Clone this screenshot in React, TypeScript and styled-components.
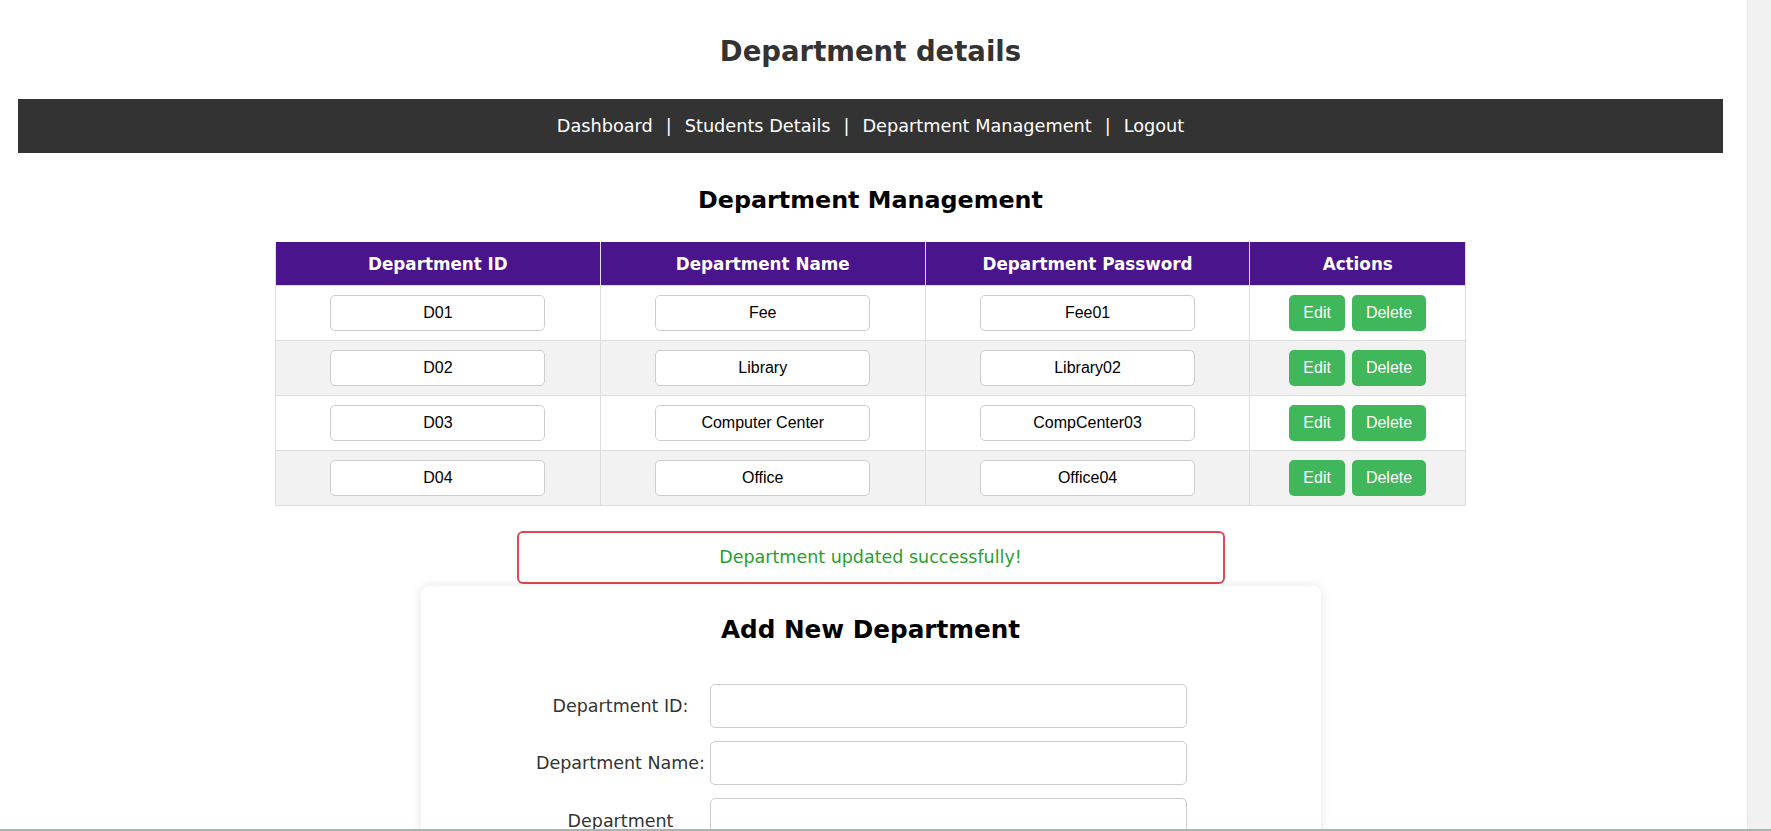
import React from 'react';
import styled, { createGlobalStyle } from 'styled-components';

const GlobalStyle = createGlobalStyle`
	html, body {
		margin: 0;
		padding: 0;
		height: 100%;
		overflow: hidden;
		background: #fff;
		font-family: "Comic Sans MS", "DejaVu Sans", sans-serif;
	}
	#root {
		height: 100%;
	}
`;

const Shell = styled.div`
	height: 100vh;
	display: flex;
	flex-direction: column;
`;

const Body = styled.div`
	flex: 1;
	display: flex;
	min-height: 0;
`;

const Page = styled.div`
	width: 1747px;
	flex-shrink: 0;
	box-sizing: border-box;
	padding: 0 24px 0 18px;
	overflow: hidden;
	background: #fff;
`;

const ScrollTrack = styled.div`
	flex: 1;
	background: #f1f1f1;
	border-left: 1px solid #e8e8e8;
`;

const BottomRule = styled.div`
	height: 2px;
	background: #a9b3b1;
`;

const PageTitle = styled.h1`
	margin: 33px 0 29px;
	text-align: center;
	font-size: 27.5px;
	line-height: 37px;
	font-weight: bold;
	color: #333;
`;

const NavBar = styled.nav`
	height: 54px;
	background: #333;
	display: flex;
	align-items: center;
	justify-content: center;
	color: #fff;
	font-size: 17.7px;
`;

const NavLink = styled.a`
	color: #fff;
	text-decoration: none;
`;

const NavSep = styled.span`
	margin: 0 13px;
`;

const SectionTitle = styled.h2`
	margin: 31px 0 26px;
	text-align: center;
	font-size: 23.8px;
	line-height: 32px;
	font-weight: bold;
	color: #000;
`;

const Table = styled.table`
	width: 1191px;
	margin: 0 auto;
	border-collapse: collapse;
`;

const HeadCell = styled.th<{ $w: number }>`
	width: ${(p) => p.$w}px;
	height: 43px;
	padding: 0;
	background: #4a148c;
	color: #fff;
	font-size: 16.8px;
	font-weight: bold;
	text-align: center;
	border: 1px solid #ddd;
	border-top: none;
`;

const Row = styled.tr<{ $striped: boolean }>`
	background: ${(p) => (p.$striped ? '#f2f2f2' : '#fff')};
`;

const Cell = styled.td`
	height: 36px;
	padding: 9px;
	text-align: center;
	border: 1px solid #ddd;
`;

const CellInput = styled.input`
	width: 215px;
	height: 36px;
	box-sizing: border-box;
	border: 1px solid #ccc;
	border-radius: 5px;
	background: #fff;
	font-family: "Liberation Sans", Arial, sans-serif;
	font-size: 16px;
	color: #000;
	text-align: center;
	outline: none;
	vertical-align: middle;
`;

const ActionButton = styled.button`
	height: 36px;
	padding: 0 14px;
	margin: 0 3.5px;
	border: none;
	border-radius: 5px;
	background: #3fb75a;
	color: #fff;
	font-family: "Liberation Sans", Arial, sans-serif;
	font-size: 16px;
	cursor: pointer;
	vertical-align: middle;
`;

const Notice = styled.div`
	width: 708px;
	box-sizing: border-box;
	margin: 25px auto 2px;
	padding: 14px 10px;
	border: 2px solid #dc4a52;
	border-radius: 6px;
	text-align: center;
	color: #28a02c;
	font-size: 17.5px;
	line-height: 21px;
`;

const Card = styled.div`
	width: 900px;
	box-sizing: border-box;
	margin: 0 auto;
	padding: 28px 22px 40px;
	background: #fff;
	border-radius: 8px;
	box-shadow: 0 0 12px rgba(0, 0, 0, 0.1);
`;

const CardTitle = styled.h2`
	margin: 0 0 38px;
	text-align: center;
	font-size: 24.7px;
	line-height: 32px;
	font-weight: bold;
	color: #000;
`;

const FormRow = styled.div`
	display: flex;
	align-items: center;
	justify-content: center;
	gap: 4px;
	margin-bottom: 13px;
	padding-right: 19px;
`;

const FormLabel = styled.label`
	width: 170px;
	text-align: center;
	font-size: 17.5px;
	line-height: 24px;
	color: #333;
`;

const FormInput = styled.input<{ $tall?: boolean }>`
	width: 477px;
	height: ${(p) => (p.$tall ? 70 : 44)}px;
	box-sizing: border-box;
	border: 1px solid #ccc;
	border-radius: 5px;
	outline: none;
`;

const departments = [
	{ id: 'D01', name: 'Fee', password: 'Fee01' },
	{ id: 'D02', name: 'Library', password: 'Library02' },
	{ id: 'D03', name: 'Computer Center', password: 'CompCenter03' },
	{ id: 'D04', name: 'Office', password: 'Office04' },
];

const navItems = ['Dashboard', 'Students Details', 'Department Management', 'Logout'];

const App: React.FC = () => {
	return (
		<Shell>
			<GlobalStyle />
			<Body>
				<Page>
					<PageTitle>Department details</PageTitle>
					<NavBar>
						{navItems.map((item, i) => (
							<React.Fragment key={item}>
								{i > 0 && <NavSep>|</NavSep>}
								<NavLink href="#">{item}</NavLink>
							</React.Fragment>
						))}
					</NavBar>

					<SectionTitle>Department Management</SectionTitle>
					<Table>
						<thead>
							<tr>
								<HeadCell $w={325}>Department ID</HeadCell>
								<HeadCell $w={325}>Department Name</HeadCell>
								<HeadCell $w={325}>Department Password</HeadCell>
								<HeadCell $w={216}>Actions</HeadCell>
							</tr>
						</thead>
						<tbody>
							{departments.map((d, i) => (
								<Row key={d.id} $striped={i % 2 === 1}>
									<Cell>
										<CellInput defaultValue={d.id} />
									</Cell>
									<Cell>
										<CellInput defaultValue={d.name} />
									</Cell>
									<Cell>
										<CellInput defaultValue={d.password} />
									</Cell>
									<Cell>
										<ActionButton>Edit</ActionButton>
										<ActionButton>Delete</ActionButton>
									</Cell>
								</Row>
							))}
						</tbody>
					</Table>

					<Notice>Department updated successfully!</Notice>

					<Card>
						<CardTitle>Add New Department</CardTitle>
						<FormRow>
							<FormLabel>Department ID:</FormLabel>
							<FormInput />
						</FormRow>
						<FormRow>
							<FormLabel>Department Name:</FormLabel>
							<FormInput />
						</FormRow>
						<FormRow>
							<FormLabel>Department Password:</FormLabel>
							<FormInput type="password" $tall />
						</FormRow>
					</Card>
				</Page>
				<ScrollTrack />
			</Body>
			<BottomRule />
		</Shell>
	);
};

export default App;
